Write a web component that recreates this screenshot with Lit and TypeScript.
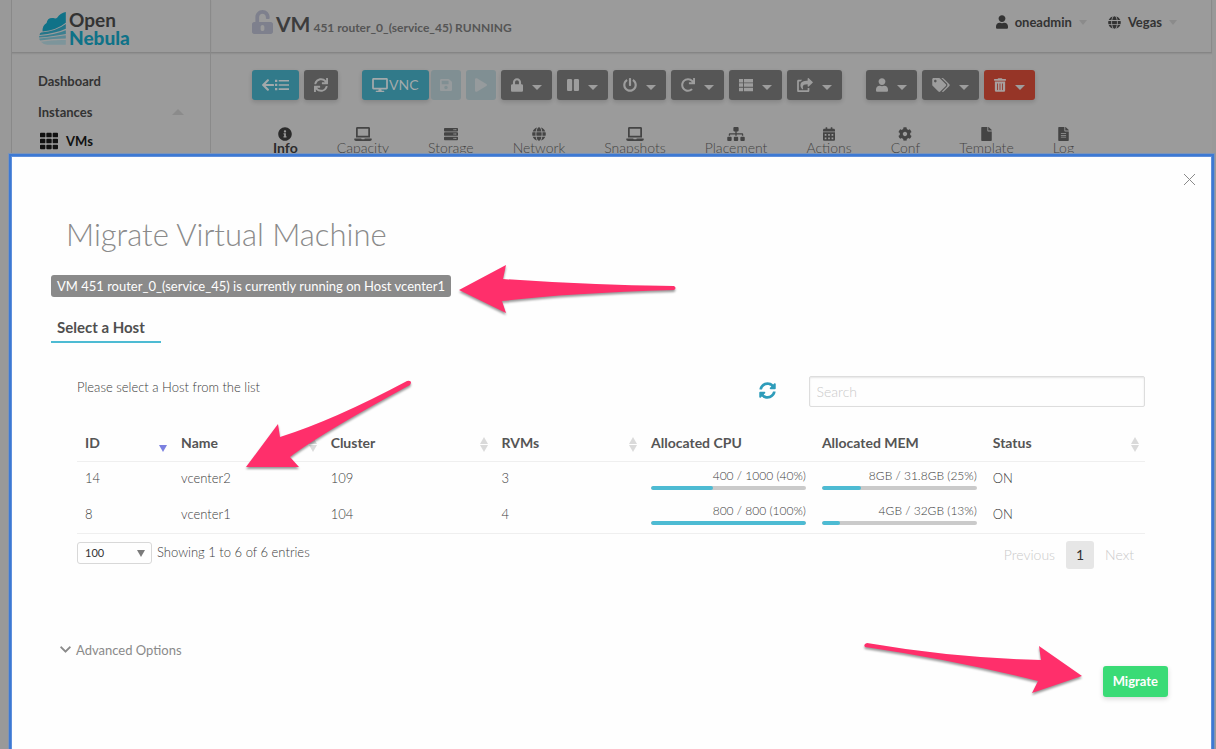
import { LitElement, html, svg, css, nothing } from "lit";
import { customElement, property } from "lit/decorators.js";
import { styleMap } from "lit/directives/style-map.js";
import { classMap } from "lit/directives/class-map.js";

interface Glyph {
  w: number;
  d: string;
}

const rect = (x: number, y: number, w: number, h: number) => `M${x} ${y}h${w}v${h}h${-w}z`;
const dot = (x: number, y: number) => `M${x - 24} ${y}a24 24 0 1 0 48 0a24 24 0 1 0 -48 0z`;
const slab = (y: number) =>
  `M32 ${y}h448a32 32 0 0 1 32 32v64a32 32 0 0 1 -32 32H32a32 32 0 0 1 -32 -32v-64a32 32 0 0 1 32 -32z${dot(368, y + 64)}${dot(432, y + 64)}`;

const GLYPHS: Record<string, Glyph> = {
  arrowLeft: { w: 448, d: "M257.5 445.1l-22.2 22.2c-9.4 9.4-24.6 9.4-33.9 0L7 273c-9.4-9.4-9.4-24.6 0-33.9L201.4 44.7c9.4-9.4 24.6-9.4 33.9 0l22.2 22.2c9.5 9.5 9.3 25-.4 34.3L136.6 216H424c13.3 0 24 10.7 24 24v32c0 13.3-10.7 24-24 24H136.6l120.5 114.8c9.8 9.3 10 24.8.4 34.3z" },
  list: { w: 512, d: [64, 216, 368].map((y) => rect(0, y - 4, 84, 84) + rect(136, y + 8, 376, 60)).join("") },
  thList: { w: 512, d: [32, 192, 352].map((y) => rect(0, y, 150, 128) + rect(182, y, 330, 128)).join("") },
  grid: { w: 512, d: [24, 192, 360].map((y) => [0, 180, 360].map((x) => `M${x + 24} ${y}h104a24 24 0 0 1 24 24v80a24 24 0 0 1 -24 24h-104a24 24 0 0 1 -24 -24v-80a24 24 0 0 1 24 -24z`).join("")).join("") },
  sync: { w: 512, d: "M440.65 12.57l4 82.77A247.16 247.16 0 0 0 255.83 8C134.73 8 33.91 94.92 12.29 209.82A12 12 0 0 0 24.09 224h49.05a12 12 0 0 0 11.67-9.26 175.91 175.91 0 0 1 317-56.94l-101.46-4.86a12 12 0 0 0-12.57 12v47.41a12 12 0 0 0 12 12H500a12 12 0 0 0 12-12V12a12 12 0 0 0-12-12h-47.37a12 12 0 0 0-11.98 12.57zM255.83 432a175.61 175.61 0 0 1-146-77.8l101.8 4.87a12 12 0 0 0 12.57-12v-47.4a12 12 0 0 0-12-12H12a12 12 0 0 0-12 12V500a12 12 0 0 0 12 12h47.35a12 12 0 0 0 12-12.6l-4.15-82.57A247.17 247.17 0 0 0 255.83 504c121.11 0 221.93-86.92 243.55-201.82a12 12 0 0 0-11.8-14.18h-49.05a12 12 0 0 0-11.67 9.26A175.86 175.86 0 0 1 255.83 432z" },
  syncAlt: { w: 512, d: "M370.72 133.28C339.458 104.008 298.888 87.962 255.848 88c-77.458.068-144.328 53.178-162.791 126.85-1.344 5.363-6.122 9.15-11.651 9.15H24.103c-7.498 0-13.194-6.807-11.807-14.176C33.933 94.924 134.813 8 256 8c66.448 0 126.791 26.136 171.315 68.685L463.03 40.97C478.149 25.851 504 36.559 504 57.941V192c0 13.255-10.745 24-24 24H345.941c-21.382 0-32.09-25.851-16.971-40.971l41.75-41.749zM32 296h134.059c21.382 0 32.09 25.851 16.971 40.971l-41.75 41.75c31.262 29.273 71.835 45.319 114.876 45.28 77.418-.07 144.315-53.144 162.787-126.849 1.344-5.363 6.122-9.15 11.651-9.15h57.304c7.498 0 13.194 6.807 11.807 14.176C478.067 417.076 377.187 504 256 504c-66.448 0-126.791-26.136-171.315-68.685L48.97 471.03C33.851 486.149 8 475.441 8 454.059V320c0-13.255 10.745-24 24-24z" },
  user: { w: 448, d: "M224 256c70.7 0 128-57.3 128-128S294.7 0 224 0 96 57.3 96 128s57.3 128 128 128zm89.6 32h-16.7c-22.2 10.2-46.9 16-72.9 16s-50.6-5.8-72.9-16h-16.7C60.2 288 0 348.2 0 422.4V464c0 26.5 21.5 48 48 48h352c26.5 0 48-21.5 48-48v-41.6c0-74.2-60.2-134.4-134.4-134.4z" },
  globe: { w: 496, d: "M336.5 160C322 70.7 287.8 8 248 8s-74 62.7-88.5 152h177zM152 256c0 22.2 1.2 43.5 3.3 64h185.3c2.1-20.5 3.3-41.8 3.3-64s-1.2-43.5-3.3-64H155.3c-2.1 20.5-3.3 41.8-3.3 64zm324.7-96c-28.6-67.9-86.5-120.4-158-141.6 24.4 33.8 41.2 84.7 50 141.6h108zM177.2 18.4C105.8 39.6 47.8 92.1 19.3 160h108c8.7-56.9 25.5-107.8 49.9-141.6zM487.4 192H372.7c2.1 21 3.3 42.5 3.3 64s-1.2 43-3.3 64h114.6c5.5-20.5 8.6-41.8 8.6-64s-3.1-43.5-8.5-64zM120 256c0-21.5 1.2-43 3.3-64H8.6C3.2 212.5 0 233.8 0 256s3.2 43.5 8.6 64h114.6c-2-21-3.2-42.5-3.2-64zm39.5 96c14.5 89.3 48.7 152 88.5 152s74-62.7 88.5-152h-177zm159.3 141.6c71.4-21.2 129.4-73.7 158-141.6h-108c-8.8 56.9-25.6 107.8-50 141.6zM19.3 352c28.6 67.9 86.5 120.4 158 141.6-24.4-33.8-41.2-84.7-50-141.6h-108z" },
  lock: { w: 448, d: "M400 224h-24v-72C376 68.2 307.8 0 224 0S72 68.2 72 152v72H48c-26.5 0-48 21.5-48 48v192c0 26.5 21.5 48 48 48h352c26.5 0 48-21.5 48-48V272c0-26.5-21.5-48-48-48zm-104 0H152v-72c0-39.7 32.3-72 72-72s72 32.3 72 72v72z" },
  unlock: { w: 448, d: "M400 256H152V152.9c0-39.6 31.7-72.5 71.3-72.9 40-.4 72.7 32.1 72.7 72v16c0 13.3 10.7 24 24 24h32c13.3 0 24-10.7 24-24v-16C376 68 307.5-.3 223.5 0 139.5.3 72 69.5 72 153.5V256H48c-26.5 0-48 21.5-48 48v160c0 26.5 21.5 48 48 48h352c26.5 0 48-21.5 48-48V304c0-26.5-21.5-48-48-48zM264 408c0 22.1-17.9 40-40 40s-40-17.9-40-40v-48c0-22.1 17.9-40 40-40s40 17.9 40 40v48z" },
  save: { w: 448, d: "M433.941 129.941l-83.882-83.882A48 48 0 0 0 316.118 32H48C21.49 32 0 53.49 0 80v352c0 26.51 21.49 48 48 48h352c26.51 0 48-21.49 48-48V163.882a48 48 0 0 0-14.059-33.941zM224 416c-35.346 0-64-28.654-64-64 0-35.346 28.654-64 64-64s64 28.654 64 64c0 35.346-28.654 64-64 64zm96-304.52V212c0 6.627-5.373 12-12 12H76c-6.627 0-12-5.373-12-12V108c0-6.627 5.373-12 12-12h228.52c3.183 0 6.235 1.264 8.485 3.515l3.48 3.48A11.996 11.996 0 0 1 320 111.48z" },
  play: { w: 448, d: "M424.4 214.7L72.4 6.6C43.8-10.3 0 6.1 0 47.9V464c0 37.5 40.7 60.1 72.4 41.3l352-208c31.4-18.5 31.5-64.1 0-82.6z" },
  pause: { w: 448, d: "M144 479H48c-26.5 0-48-21.5-48-48V79c0-26.5 21.5-48 48-48h96c26.5 0 48 21.5 48 48v352c0 26.5-21.5 48-48 48zm304-48V79c0-26.5-21.5-48-48-48h-96c-26.5 0-48 21.5-48 48v352c0 26.5 21.5 48 48 48h96c26.5 0 48-21.5 48-48z" },
  power: { w: 512, d: "M400 54.1c63 45 104 118.6 104 201.9 0 136.8-110.8 247.7-247.5 248C120 504.3 8.2 393 8 256.4 7.9 173.1 48.9 99.3 111.8 54.2c11.7-8.3 28-4.8 35 7.7L162.6 90c5.9 10.5 3.1 23.8-6.6 31-41.5 30.8-68 79.6-68 134.9-.1 92.3 74.5 168.1 168 168.1 91.6 0 168.6-74.2 168-169.1-.3-51.8-24.7-101.8-68.1-134-9.7-7.2-12.4-20.5-6.5-30.9l15.8-28.1c7-12.4 23.2-16.1 34.8-7.8zM296 264V24c0-13.3-10.7-24-24-24h-32c-13.3 0-24 10.7-24 24v240c0 13.3 10.7 24 24 24h32c13.3 0 24-10.7 24-24z" },
  redo: { w: 512, d: "M500.33 0h-47.41a12 12 0 0 0-12 12.57l4 82.76A247.42 247.42 0 0 0 256 8C119.34 8 7.9 119.53 8 256.19 8.1 393.07 119.1 504 256 504a247.1 247.1 0 0 0 166.18-63.91 12 12 0 0 0 .48-17.43l-34-34a12 12 0 0 0-16.38-.55A176 176 0 1 1 402.1 157.8l-101.53-4.87a12 12 0 0 0-12.57 12v47.41a12 12 0 0 0 12 12h200.33a12 12 0 0 0 12-12V12a12 12 0 0 0-12-12z" },
  share: { w: 576, d: "M568.482 177.448L424.479 313.433C409.3 327.768 384 317.14 384 295.985v-71.963c-144.575.97-205.566 35.113-164.775 171.353 4.483 14.973-12.846 26.567-25.006 17.33C155.252 383.105 120 326.488 120 269.339c0-143.937 117.599-172.5 264-173.312V24.012c0-21.174 25.317-31.768 40.479-17.448l144.003 135.988c10.02 9.463 10.028 25.425 0 34.896zM384 379.128V448H64V128h50.916a11.99 11.99 0 0 0 8.648-3.693c14.953-15.568 32.237-27.89 51.014-37.676C185.708 80.83 181.584 64 169.033 64H48C21.49 64 0 85.49 0 112v352c0 26.51 21.49 48 48 48h352c26.51 0 48-21.49 48-48v-88.806c0-8.288-8.197-14.066-16.011-11.302a71.83 71.83 0 0 1-34.189 3.377c-7.27-1.046-13.8 4.514-13.8 11.859z" },
  tags: { w: 640, d: "M497.941 225.941L286.059 14.059A48 48 0 0 0 252.118 0H48C21.49 0 0 21.49 0 48v204.118a48 48 0 0 0 14.059 33.941l211.882 211.882c18.744 18.745 49.136 18.746 67.882 0l204.118-204.118c18.745-18.745 18.745-49.137 0-67.882zM112 160c-26.51 0-48-21.49-48-48s21.49-48 48-48 48 21.49 48 48-21.49 48-48 48zm513.941 133.823L421.823 497.941c-18.745 18.745-49.137 18.745-67.882 0l-.36-.36L527.64 323.522c16.999-16.999 26.362-39.6 26.362-63.64s-9.362-46.641-26.362-63.64L331.397 0h48.721a48 48 0 0 1 33.941 14.059l211.882 211.882c18.745 18.745 18.745 49.137 0 67.882z" },
  trash: { w: 448, d: "M32 464a48 48 0 0 0 48 48h288a48 48 0 0 0 48-48V128H32zm272-256a16 16 0 0 1 32 0v224a16 16 0 0 1-32 0zm-96 0a16 16 0 0 1 32 0v224a16 16 0 0 1-32 0zm-96 0a16 16 0 0 1 32 0v224a16 16 0 0 1-32 0zM432 32H312l-9.4-18.7A24 24 0 0 0 281.1 0H166.8a23.72 23.72 0 0 0-21.4 13.3L136 32H16A16 16 0 0 0 0 48v32a16 16 0 0 0 16 16h416a16 16 0 0 0 16-16V48a16 16 0 0 0-16-16z" },
  desktop: { w: 576, d: "M528 0H48C21.5 0 0 21.5 0 48v320c0 26.5 21.5 48 48 48h192l-16 48h-72c-13.3 0-24 10.7-24 24s10.7 24 24 24h272c13.3 0 24-10.7 24-24s-10.7-24-24-24h-72l-16-48h192c26.5 0 48-21.5 48-48V48c0-26.5-21.5-48-48-48zm-16 352H64V64h448v288z" },
  info: { w: 512, d: "M256 8C119.043 8 8 119.083 8 256c0 136.997 111.043 248 248 248s248-111.003 248-248C504 119.083 392.957 8 256 8zm0 110c23.196 0 42 18.804 42 42s-18.804 42-42 42-42-18.804-42-42 18.804-42 42-42zm56 254c0 6.627-5.373 12-12 12h-88c-6.627 0-12-5.373-12-12v-24c0-6.627 5.373-12 12-12h12v-64h-12c-6.627 0-12-5.373-12-12v-24c0-6.627 5.373-12 12-12h64c6.627 0 12 5.373 12 12v100h12c6.627 0 12 5.373 12 12v24z" },
  laptop: { w: 640, d: "M624 416H381.54c-.74 19.81-14.71 32-32.74 32H288c-18.69 0-33.02-17.47-32.77-32H16c-8.8 0-16 7.2-16 16v16c0 35.2 28.8 64 64 64h512c35.2 0 64-28.8 64-64v-16c0-8.8-7.2-16-16-16zM576 48c0-26.4-21.6-48-48-48H112C85.6 0 64 21.6 64 48v336h512V48zm-64 272H128V64h384v256z" },
  server: { w: 512, d: slab(32) + slab(192) + slab(352) },
  sitemap: { w: 640, d: "M128 352H32c-17.67 0-32 14.33-32 32v96c0 17.67 14.33 32 32 32h96c17.67 0 32-14.33 32-32v-96c0-17.67-14.33-32-32-32zm-24-80h192v48h48v-48h192v48h48v-57.59c0-21.17-17.23-38.41-38.41-38.41H344v-64h40c17.67 0 32-14.33 32-32V32c0-17.67-14.33-32-32-32H256c-17.67 0-32 14.33-32 32v96c0 17.67 14.33 32 32 32h40v64H94.41C73.23 224 56 241.23 56 262.41V320h48v-48zm264 80h-96c-17.67 0-32 14.33-32 32v96c0 17.67 14.33 32 32 32h96c17.67 0 32-14.33 32-32v-96c0-17.67-14.33-32-32-32zm240 0h-96c-17.67 0-32 14.33-32 32v96c0 17.67 14.33 32 32 32h96c17.67 0 32-14.33 32-32v-96c0-17.67-14.33-32-32-32z" },
  calendar: { w: 448, d: "M0 464c0 26.5 21.5 48 48 48h352c26.5 0 48-21.5 48-48V192H0v272zM400 64h-48V16c0-8.8-7.2-16-16-16h-32c-8.8 0-16 7.2-16 16v48H160V16c0-8.8-7.2-16-16-16h-32c-8.8 0-16 7.2-16 16v48H48C21.5 64 0 85.5 0 112v48h448v-48c0-26.5-21.5-48-48-48z" + [256, 384].map((y) => [64, 192, 320].map((x) => rect(x, y, 64, 64)).join("")).join("") },
  cog: { w: 512, d: "M487.4 315.7l-42.6-24.6c4.3-23.2 4.3-47 0-70.2l42.6-24.6c4.9-2.8 7.1-8.6 5.5-14-11.1-35.6-30-67.8-54.7-94.6-3.8-4.1-10-5.1-14.8-2.3L380.8 110c-17.9-15.4-38.5-27.3-60.8-35.1V25.8c0-5.6-3.9-10.5-9.4-11.7-36.7-8.2-74.3-7.8-109.2 0-5.5 1.2-9.4 6.1-9.4 11.7V75c-22.2 7.9-42.8 19.8-60.8 35.1L88.7 85.5c-4.9-2.8-11-1.9-14.8 2.3-24.7 26.7-43.6 58.9-54.7 94.6-1.7 5.4.6 11.2 5.5 14L67.3 221c-4.3 23.2-4.3 47 0 70.2l-42.6 24.6c-4.9 2.8-7.1 8.6-5.5 14 11.1 35.6 30 67.8 54.7 94.6 3.8 4.1 10 5.1 14.8 2.3l42.6-24.6c17.9 15.4 38.5 27.3 60.8 35.1v49.2c0 5.6 3.9 10.5 9.4 11.7 36.7 8.2 74.3 7.8 109.2 0 5.5-1.2 9.4-6.1 9.4-11.7v-49.2c22.2-7.9 42.8-19.8 60.8-35.1l42.6 24.6c4.9 2.8 11 1.9 14.8-2.3 24.7-26.7 43.6-58.9 54.7-94.6 1.5-5.5-.7-11.3-5.6-14.1zM256 336c-44.1 0-80-35.9-80-80s35.9-80 80-80 80 35.9 80 80-35.9 80-80 80z" },
  file: { w: 384, d: "M224 136V0H24C10.7 0 0 10.7 0 24v464c0 13.3 10.7 24 24 24h336c13.3 0 24-10.7 24-24V160H248c-13.2 0-24-10.8-24-24zm160-14.1v6.1H256V0h6.1c6.4 0 12.5 2.5 17 7l97.9 98c4.5 4.5 7 10.6 7 16.9z" },
  fileText: { w: 384, d: "M224 136V0H24C10.7 0 0 10.7 0 24v464c0 13.3 10.7 24 24 24h336c13.3 0 24-10.7 24-24V160H248c-13.2 0-24-10.8-24-24zm160-14.1v6.1H256V0h6.1c6.4 0 12.5 2.5 17 7l97.9 98c4.5 4.5 7 10.6 7 16.9z" + [224, 288, 352].map((y) => rect(96, y, 192, 34)).join("") },
  chevron: { w: 448, d: "M207.029 381.476L12.686 187.132c-9.373-9.373-9.373-24.569 0-33.941l22.667-22.667c9.357-9.357 24.522-9.375 33.901-.04L224 284.505l154.745-154.021c9.379-9.335 24.544-9.317 33.901.04l22.667 22.667c9.373 9.373 9.373 24.569 0 33.941L240.971 381.476c-9.373 9.372-24.569 9.372-33.942 0z" },
};

@customElement("ui-icon")
export class UiIcon extends LitElement {
  @property() name = "";
  @property({ type: Number }) size = 14;

  static styles = css`
    :host { display: inline-flex; flex: none; }
    svg { display: block; fill: currentColor; fill-rule: evenodd; }
  `;

  render() {
    const glyph = GLYPHS[this.name];
    if (!glyph) return nothing;
    return html`<svg
      aria-hidden="true"
      height=${this.size}
      width=${Math.round((this.size * glyph.w) / 512)}
      viewBox="0 0 ${glyph.w} 512"
    >${svg`<path d=${glyph.d}></path>`}</svg>`;
  }
}

interface Action {
  icon: string;
  label: string;
  kind?: string;
  text?: string;
  lead?: string;
  menu?: boolean;
  disabled?: boolean;
}

const ACTIONS: Action[][] = [
  [
    { icon: "list", lead: "arrowLeft", label: "Back to list", kind: "primary" },
    { icon: "sync", label: "Refresh" },
  ],
  [
    { icon: "desktop", label: "VNC", text: "VNC", kind: "primary joined" },
    { icon: "save", label: "Save as", kind: "primary", disabled: true },
    { icon: "play", label: "Resume", kind: "primary", disabled: true },
    { icon: "lock", label: "Lock", menu: true },
    { icon: "pause", label: "Suspend", menu: true },
    { icon: "power", label: "Power", menu: true },
    { icon: "redo", label: "Reboot", menu: true },
    { icon: "thList", label: "Manage", menu: true },
    { icon: "share", label: "Recover", menu: true },
  ],
  [
    { icon: "user", label: "Ownership", menu: true },
    { icon: "tags", label: "Labels", menu: true },
    { icon: "trash", label: "Terminate", kind: "alert", menu: true },
  ],
];

const TABS = [
  ["info", "Info"],
  ["laptop", "Capacity"],
  ["server", "Storage"],
  ["globe", "Network"],
  ["laptop", "Snapshots"],
  ["sitemap", "Placement"],
  ["calendar", "Actions"],
  ["cog", "Conf"],
  ["file", "Template"],
  ["fileText", "Log"],
];

const COLUMNS = [
  { key: "id", title: "ID", sort: "desc" },
  { key: "name", title: "Name", sort: "both" },
  { key: "cluster", title: "Cluster", sort: "both" },
  { key: "rvms", title: "RVMs", sort: "both" },
  { key: "cpu", title: "Allocated CPU", sort: "" },
  { key: "mem", title: "Allocated MEM", sort: "" },
  { key: "status", title: "Status", sort: "both" },
];

const HOSTS = [
  { id: 14, name: "vcenter2", cluster: 109, rvms: 3, cpu: "400 / 1000 (40%)", cpuPct: 40, mem: "8GB / 31.8GB (25%)", memPct: 25, status: "ON" },
  { id: 8, name: "vcenter1", cluster: 104, rvms: 4, cpu: "800 / 800 (100%)", cpuPct: 100, mem: "4GB / 32GB (13%)", memPct: 12, status: "ON" },
];

@customElement("migrate-dialog")
export class MigrateDialog extends LitElement {
  static styles = css`
    :host { display: block; }
    button, input, select { font: inherit; color: inherit; margin: 0; }
    .dialog {
      position: relative;
      box-sizing: border-box;
      min-height: 100%;
      padding: 58px 40px 52px 39px;
      background: #fefefe;
      box-shadow: 0 0 0 1px #5e8fdb, 0 0 0 3px #3d79d3, 0 0 0 4px #7d94b8;
      color: #3c3c3c;
      font-size: 13px;
      line-height: 20px;
      font-weight: 300;
    }
    .close {
      position: absolute;
      top: 16px;
      right: 15px;
      padding: 0;
      border: 0;
      background: none;
      color: #8a8a8a;
      line-height: 0;
    }
    .close svg, .arrow { display: block; }
    h3 { margin: 0 15px; color: #8a8a8a; font-size: 31px; line-height: 38px; font-weight: 300; }
    .label {
      display: inline-block;
      margin-top: 22px;
      padding: 0 6px;
      border-radius: 3px;
      background: #8a8a8a;
      color: #fefefe;
      line-height: 22px;
      font-weight: 400;
    }
    .steps { display: flex; margin-top: 16px; }
    .step {
      padding: 4px 16px 4px 6px;
      border-bottom: 2px solid #4dbbd3;
      font-size: 15px;
      line-height: 20px;
      font-weight: 700;
      color: #4f4f4f;
    }
    .body { margin: 0 26px; }
    .tools { display: flex; align-items: center; margin-top: 33px; }
    .tools p { margin: 0 auto 10px 0; }
    .reload { padding: 0; margin: 0 33px 3px 0; border: 0; background: none; color: #2e9cba; line-height: 0; }
    .search {
      box-sizing: border-box;
      width: 31.5%;
      height: 31px;
      padding: 0 7px;
      border: 1px solid #ddd;
      border-radius: 2px;
      background: #fefefe;
      box-shadow: inset 0 1px 2px rgba(10, 10, 10, 0.1);
      font-size: 14px;
    }
    .search::placeholder { color: #cacaca; opacity: 1; }
    table { width: 100%; margin-top: 17px; border-collapse: collapse; table-layout: fixed; }
    .id { width: 9%; }
    .name { width: 14%; }
    .cluster { width: 16%; }
    .rvms { width: 14%; }
    .cpu, .mem { width: 16%; }
    th, td { box-sizing: border-box; height: 36px; padding: 0 8px; text-align: left; vertical-align: middle; }
    th { height: 37px; padding-top: 2px; border-bottom: 1px solid #efefef; font-weight: 700; font-size: 14px; color: #555; }
    tbody { border-bottom: 1px solid #efefef; }
    td { padding-bottom: 2px; }
    .head { display: flex; justify-content: space-between; align-items: center; margin-right: -2px; }
    .sort { display: flex; flex-direction: column; gap: 1px; margin-top: 2px; }
    .up, .down { width: 0; height: 0; border: 4px solid transparent; }
    .up { border-top: 0; border-bottom: 7px solid #dadada; }
    .down { border-bottom: 0; border-top: 7px solid #dadada; }
    .desc .up { visibility: hidden; }
    .desc .down { border-top-color: #7b80e0; }
    .usage { display: block; text-align: right; font-size: 12px; line-height: 18px; margin-bottom: 1px; }
    .track { height: 4px; border-radius: 2px; background: #cacaca; overflow: hidden; }
    .fill { height: 4px; border-radius: 2px; background: #4dbbd3; }
    .foot { display: flex; align-items: center; margin-top: 7px; }
    .count { position: relative; display: flex; align-items: center; margin-bottom: 4px; }
    .count select {
      appearance: none;
      width: 75px;
      height: 22px;
      padding: 0 7px;
      border: 1px solid #d8d8d8;
      border-radius: 3px;
      background: #fefefe;
      font-size: 11px;
      line-height: 20px;
      font-weight: 400;
      color: #333;
    }
    .count::after {
      content: "";
      position: absolute;
      right: 7px;
      top: 8px;
      border: 4px solid transparent;
      border-top: 7px solid #7a7a7a;
      border-bottom: 0;
    }
    .summary { margin: 0 auto 6px 5px; }
    .pages { display: flex; align-items: center; font-size: 14px; }
    .pages button { height: 28px; padding: 0 11px; border: 0; border-radius: 3px; background: none; line-height: 28px; }
    .pages button:disabled { color: #cacaca; }
    .pages .current { width: 28px; padding: 0; background: #e6e6e6; color: #333; font-weight: 400; }
    .advanced {
      display: flex;
      align-items: center;
      gap: 5px;
      margin: 71px 0 0 9px;
      padding: 0;
      border: 0;
      background: none;
      color: #8a8a8a;
      font-weight: 400;
      line-height: 20px;
    }
    .actions { display: flex; justify-content: flex-end; margin: 6px 3px 0 0; }
    .submit {
      height: 31px;
      padding: 0 10px;
      border: 0;
      border-radius: 3px;
      background: #3adb76;
      box-shadow: 0 2px 5px rgba(10, 10, 10, 0.16);
      color: #fefefe;
      font-weight: 700;
    }
    .arrow { position: absolute; fill: #ff2f6b; overflow: visible; filter: drop-shadow(0 2px 1px rgba(0, 0, 0, 0.4)); pointer-events: none; }
    .arrow-label { left: 447px; top: 108px; }
    .arrow-row { left: 234px; top: 223px; }
    .arrow-submit { right: 128px; top: 485px; }
  `;

  private sorter(kind: string) {
    return kind
      ? html`<span class=${classMap({ sort: true, desc: kind === "desc" })}><i class="up"></i><i class="down"></i></span>`
      : nothing;
  }

  private usage(text: string, pct: number) {
    return html`<span class="usage">${text}</span>
      <div class="track"><div class="fill" style=${styleMap({ width: `${pct}%` })}></div></div>`;
  }

  render() {
    return html`
      <section class="dialog" role="dialog" aria-labelledby="title">
        <button class="close" aria-label="Close">
          <svg width="13" height="13" viewBox="0 0 13 13" stroke="currentColor" fill="none"><path d="M1 1l11 11M12 1L1 12"></path></svg>
        </button>
        <h3 id="title">Migrate Virtual Machine</h3>
        <span class="label">VM 451 router_0_(service_45) is currently running on Host vcenter1</span>
        <div class="steps"><div class="step">Select a Host</div></div>
        <div class="body">
          <div class="tools">
            <p>Please select a Host from the list</p>
            <button class="reload" aria-label="Refresh hosts"><ui-icon name="syncAlt" size="17"></ui-icon></button>
            <input class="search" type="search" placeholder="Search" aria-label="Search" />
          </div>
          <table>
            <thead>
              <tr>
                ${COLUMNS.map((c) => html`<th class=${c.key} scope="col"><div class="head">${c.title}${this.sorter(c.sort)}</div></th>`)}
              </tr>
            </thead>
            <tbody>
              ${HOSTS.map(
                (h) => html`<tr>
                  <td>${h.id}</td>
                  <td>${h.name}</td>
                  <td>${h.cluster}</td>
                  <td>${h.rvms}</td>
                  <td>${this.usage(h.cpu, h.cpuPct)}</td>
                  <td>${this.usage(h.mem, h.memPct)}</td>
                  <td>${h.status}</td>
                </tr>`
              )}
            </tbody>
          </table>
          <div class="foot">
            <div class="count"><select aria-label="Entries per page"><option>100</option></select></div>
            <p class="summary">Showing 1 to 6 of 6 entries</p>
            <nav class="pages" aria-label="Pagination">
              <button disabled>Previous</button><button class="current">1</button><button disabled>Next</button>
            </nav>
          </div>
        </div>
        <button class="advanced"><ui-icon name="chevron" size="13"></ui-icon>Advanced Options</button>
        <div class="actions"><button class="submit">Migrate</button></div>

        <svg class="arrow arrow-label" width="218" height="49" viewBox="0 0 218 49" aria-hidden="true">
          <path d="M0 25L47 0L44 14Q130 20 215 21Q218 23 215 25Q110 28 43 36L47 48Z"></path>
        </svg>
        <svg class="arrow arrow-row" width="166" height="88" viewBox="0 0 166 88" aria-hidden="true">
          <path d="M0 87L32 44L34 57Q88 40 161 1Q167 0 164 5Q74 54 44 77L53 87Z"></path>
        </svg>
        <svg class="arrow arrow-submit" width="219" height="52" viewBox="0 0 219 52" aria-hidden="true">
          <path d="M218 34L175 4L177 18Q90 16 3 1Q-1 2 1 5Q90 18 174 39L168 51Z"></path>
        </svg>
      </section>
    `;
  }
}

@customElement("app-root")
export class AppRoot extends LitElement {
  static styles = css`
    :host {
      position: relative;
      display: block;
      height: 100vh;
      overflow: hidden;
      background: #999;
      color: #333;
      font-family: Lato, "Open Sans", sans-serif;
      font-size: 14px;
      line-height: 20px;
    }
    button { font: inherit; margin: 0; border: 0; }
    a { color: inherit; text-decoration: none; }
    .page {
      display: grid;
      grid-template: 53px 1fr / 199px 1fr;
      height: 100%;
      margin: 0 4px 0 11px;
      border-left: 1px solid #898989;
      box-sizing: border-box;
      background: #9b9b9b;
    }
    .brand, .top { border-bottom: 1px solid #858585; box-shadow: 0 1px 1px #909090; }
    .brand { display: flex; align-items: center; padding: 5px 0 0 27px; gap: 3px; border-right: 1px solid #8a8a8a; }
    .wordmark { display: flex; flex-direction: column; font-size: 19px; line-height: 18px; font-weight: 700; color: #333; }
    .wordmark b { color: #0f7288; }
    .top { display: flex; align-items: flex-start; padding: 10px 34px 0 41px; border-right: 1px solid #8a8a8a; }
    h1 { display: flex; align-items: baseline; gap: 3px; margin: 0 auto 0 0; font-size: 21px; line-height: 28px; font-weight: 700; color: #3c3c3c; }
    .lock { align-self: flex-start; color: #7e808d; }
    h1 small { font-size: 12px; color: #555; }
    .account { display: flex; align-items: center; gap: 7px; margin-top: 2px; padding: 0; background: none; color: #333; font-size: 13px; font-weight: 700; }
    .account + .account { margin-left: 21px; }
    .caret { width: 0; height: 0; border: 4px solid transparent; border-top: 5px solid #8b8b8b; border-bottom: 0; }
    .caret-up { width: 0; height: 0; border: 6px solid transparent; border-bottom: 6px solid #8b8b8b; border-top: 0; }
    .side { padding: 17px 26px; border-right: 1px solid #8a8a8a; font-weight: 700; font-size: 13px; }
    .side a { display: flex; align-items: center; justify-content: space-between; height: 22px; margin-bottom: 9px; }
    .side .active { justify-content: flex-start; gap: 8px; margin: -2px 0 0 2px; color: #111; }
    .main { padding: 17px 0 0 41px; overflow: hidden; }
    .toolbar { display: flex; gap: 24px; }
    .group { display: flex; gap: 5px; }
    .btn {
      display: flex;
      align-items: center;
      justify-content: center;
      gap: 9px;
      height: 30px;
      padding: 0 10px;
      border-radius: 3px;
      background: #565656;
      color: #9d9d9d;
      box-shadow: 0 2px 4px rgba(10, 10, 10, 0.16);
    }
    .primary { background: #317a8a; color: #a3a9ab; gap: 1px; }
    .joined { margin-right: -3px; }
    .alert { background: #963527; color: #a8a09f; }
    .btn:disabled { padding: 0 9px; background: #808f93; color: #969b9d; box-shadow: none; }
    .btn .arrow { width: 0; height: 0; margin-top: 4px; border: 5px solid transparent; border-top: 5px solid #9d9d9d; border-bottom: 0; }
    .tabs { display: flex; gap: 39px; margin: 27px 0 0 21px; color: #444; }
    .tab { display: flex; flex-direction: column; align-items: center; gap: 0; font-weight: 300; line-height: 14px; }
    .current { font-weight: 700; color: #2b2b2b; }
    .modal { position: absolute; top: 157px; right: 5px; bottom: 0; left: 12px; }
  `;

  private action(a: Action) {
    return html`<button class="btn ${a.kind ?? ""}" aria-label=${a.label} ?disabled=${!!a.disabled}>
      ${a.lead ? html`<ui-icon name=${a.lead} size="14"></ui-icon>` : nothing}
      <ui-icon name=${a.icon} size="14"></ui-icon>
      ${a.text ?? nothing}
      ${a.menu ? html`<i class="arrow"></i>` : nothing}
    </button>`;
  }

  render() {
    return html`
      <div class="page">
        <div class="brand">
          <svg width="27" height="33" viewBox="0 0 79 98" aria-hidden="true">
            <path fill="#0f7288" d="M79 0V32Q52 54 10 58Q9 40 22 33Q24 16 42 18Q50 21 54 16Q62 4 79 0Z"></path>
            <path fill="#23768a" d="M79 36V50Q50 64 1 68Q2 62 6 61Q50 58 79 36Z"></path>
            <path fill="#3b7f90" d="M79 54V65Q45 72 0 76V71Q46 68 79 54Z"></path>
            <path fill="#5a8995" d="M79 69V79Q40 79 3 85Q0 82 0 79Q45 74 79 69Z"></path>
            <path fill="#7d959b" d="M79 83V97H24Q12 96 5 88Q42 82 79 83Z"></path>
          </svg>
          <span class="wordmark"><span>Open</span><b>Nebula</b></span>
        </div>
        <header class="top">
          <h1><ui-icon class="lock" name="unlock" size="24"></ui-icon>VM <small>451 router_0_(service_45) RUNNING</small></h1>
          <button class="account"><ui-icon name="user" size="14"></ui-icon>oneadmin<i class="caret"></i></button>
          <button class="account"><ui-icon name="globe" size="13"></ui-icon>Vegas<i class="caret"></i></button>
        </header>
        <nav class="side">
          <a href="#dashboard">Dashboard</a>
          <a href="#instances">Instances<i class="caret-up"></i></a>
          <a class="active" href="#vms"><ui-icon name="grid" size="18"></ui-icon>VMs</a>
        </nav>
        <main class="main">
          <div class="toolbar">${ACTIONS.map((g) => html`<div class="group">${g.map((a) => this.action(a))}</div>`)}</div>
          <nav class="tabs">
            ${TABS.map(([icon, label], i) => html`<a class=${classMap({ tab: true, current: i === 0 })} href="#${label.toLowerCase()}"><ui-icon name=${icon} size="14"></ui-icon>${label}</a>`)}
          </nav>
        </main>
      </div>
      <migrate-dialog class="modal"></migrate-dialog>
    `;
  }
}
